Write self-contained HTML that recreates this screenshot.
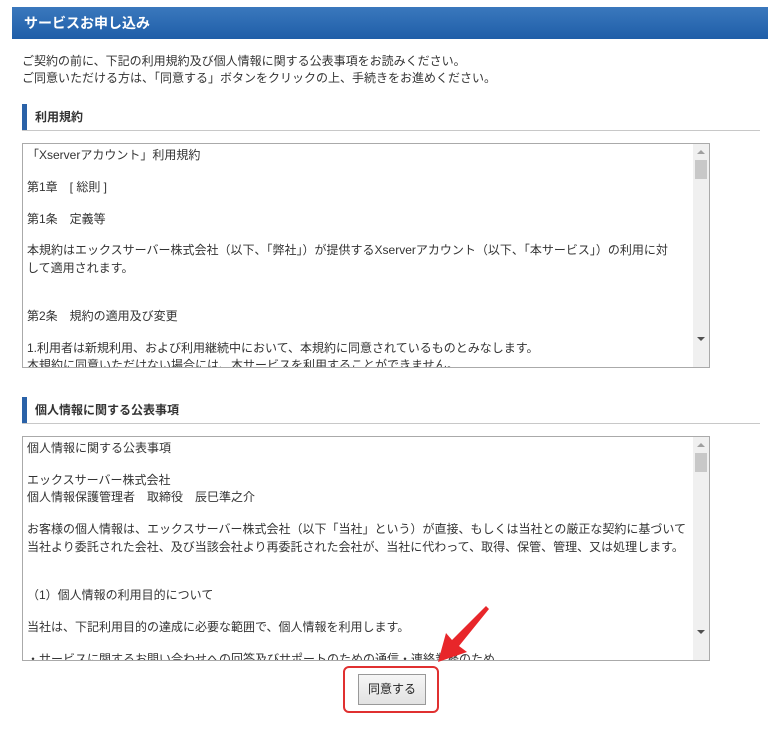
<!DOCTYPE html>
<html><head><meta charset="utf-8"><style>
body{margin:0;width:780px;height:729px;background:#fff;position:relative;overflow:hidden;font-family:"Liberation Sans","Noto Sans CJK JP",sans-serif;color:#333;font-size:12px}
.a{position:absolute;white-space:nowrap;line-height:14px}
.hdr{position:absolute;left:12px;top:7px;width:756px;height:32px;background:linear-gradient(#3a78bd,#1f5ea8);color:#fff;font-weight:bold;font-size:14px;line-height:32px;text-indent:12px}
.h2{position:absolute;left:22px;width:738px;height:26px;border-bottom:1px solid #c8c8c8}
.h2 .bar{position:absolute;left:0;top:0;width:5px;height:26px;background:#2a62a8}
.h2 span{position:absolute;left:13px;top:6px;font-weight:bold;font-size:12px;line-height:14px}
.ta{position:absolute;left:22px;width:686px;height:223px;border:1px solid #aaa;overflow:hidden;background:#fff}
.sb{position:absolute;right:0;top:0;width:16px;height:100%;background:#f0f0f0}
.th{position:absolute;left:2px;top:16px;width:12px;height:19px;background:#c8c8c8}
.up,.dn{position:absolute;left:4px;width:0;height:0;border-left:4px solid transparent;border-right:4px solid transparent}
.up{top:6px;border-bottom:4px solid #a0a0a0}
.dn{bottom:26px;border-top:4px solid #505050}
.ta .a{font-size:12px}
</style></head><body>
<div class="hdr">サービスお申し込み</div>
<div class="a" style="left:22px;top:54px">ご契約の前に、下記の利用規約及び個人情報に関する公表事項をお読みください。</div>
<div class="a" style="left:22px;top:71px">ご同意いただける方は、「同意する」ボタンをクリックの上、手続きをお進めください。</div>
<div class="h2" style="top:104px"><div class="bar"></div><span>利用規約</span></div>
<div class="ta" style="top:143px">
<div class="a" style="left:4px;top:4px">「Xserverアカウント」利用規約</div>
<div class="a" style="left:4px;top:36px">第1章　[ 総則 ]</div>
<div class="a" style="left:4px;top:68px">第1条　定義等</div>
<div class="a" style="left:4px;top:99px">本規約はエックスサーバー株式会社（以下、「弊社」）が提供するXserverアカウント（以下、「本サービス」）の利用に対</div>
<div class="a" style="left:4px;top:117px">して適用されます。</div>
<div class="a" style="left:4px;top:165px">第2条　規約の適用及び変更</div>
<div class="a" style="left:4px;top:197px">1.利用者は新規利用、および利用継続中において、本規約に同意されているものとみなします。</div>
<div class="a" style="left:4px;top:214px">本規約に同意いただけない場合には、本サービスを利用することができません。</div>
<div class="sb"><div class="up"></div><div class="th"></div><div class="dn"></div></div>
</div>
<div class="h2" style="top:397px"><div class="bar"></div><span>個人情報に関する公表事項</span></div>
<div class="ta" style="top:436px">
<div class="a" style="left:4px;top:4px">個人情報に関する公表事項</div>
<div class="a" style="left:4px;top:36px">エックスサーバー株式会社</div>
<div class="a" style="left:4px;top:53px">個人情報保護管理者　取締役　辰巳準之介</div>
<div class="a" style="left:4px;top:85px">お客様の個人情報は、エックスサーバー株式会社（以下「当社」という）が直接、もしくは当社との厳正な契約に基づいて</div>
<div class="a" style="left:4px;top:103px">当社より委託された会社、及び当該会社より再委託された会社が、当社に代わって、取得、保管、管理、又は処理します。</div>
<div class="a" style="left:4px;top:151px">（1）個人情報の利用目的について</div>
<div class="a" style="left:4px;top:183px">当社は、下記利用目的の達成に必要な範囲で、個人情報を利用します。</div>
<div class="a" style="left:4px;top:215px">・サービスに関するお問い合わせへの回答及びサポートのための通信・連絡業務のため</div>
<div class="sb"><div class="up"></div><div class="th"></div><div class="dn"></div></div>
</div>
<div style="position:absolute;left:343px;top:666px;width:96px;height:47px;border:2px solid #e03030;border-radius:6px;box-sizing:border-box"></div>
<div style="position:absolute;left:358px;top:674px;width:68px;height:31px;border:1px solid #999;background:linear-gradient(#f6f6f6,#e2e2e2);box-sizing:border-box;text-align:center;line-height:29px;font-size:12px;color:#222">同意する</div>
<svg style="position:absolute;left:0;top:0" width="780" height="729"><polygon points="489,609 486,606 452,640 446,633 438,662 467,652 459,646" fill="#e8262a"/></svg>
</body></html>
